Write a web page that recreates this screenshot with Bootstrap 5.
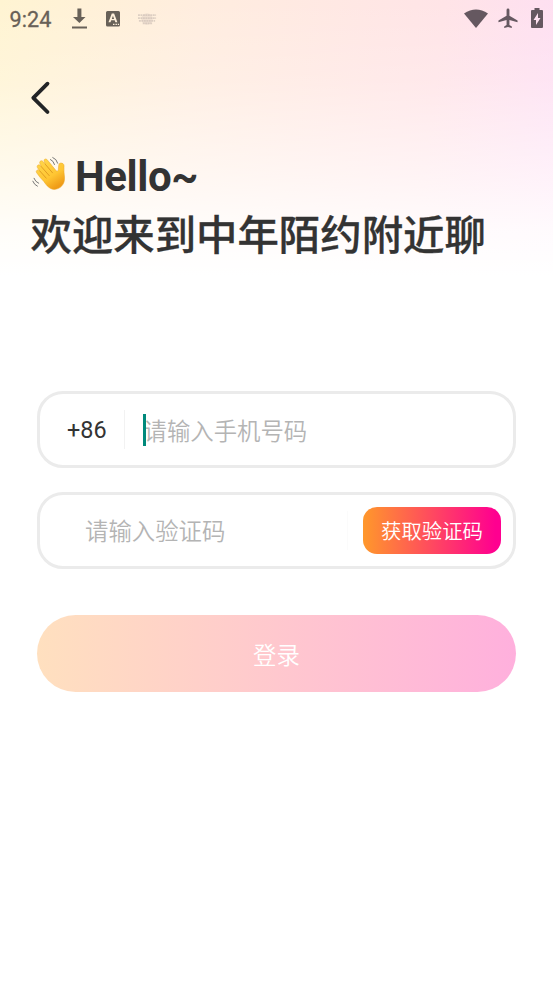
<!DOCTYPE html>
<html lang="zh-CN">
<head>
<meta charset="utf-8">
<meta name="viewport" content="width=device-width, initial-scale=1">
<title>登录</title>
<link href="https://cdn.jsdelivr.net/npm/bootstrap@5.3.0/dist/css/bootstrap.min.css" rel="stylesheet">
<style>
body{font-family:Roboto,"Noto Sans CJK SC",sans-serif;color:#333;background:#fff}
.screen{min-height:984px;background:
 linear-gradient(180deg,rgba(255,255,255,0) 0,rgba(255,255,255,.17) 80px,rgba(255,255,255,.58) 175px,rgba(255,255,255,.86) 230px,#fff 276px),
 linear-gradient(97deg,#fff4d2 0,#ffeddf 30%,#ffe4e7 66%,#fddcf8 94%)}
.status{height:37px;padding:0 11px 0 9px;color:#686158}
.clock{font-size:21.6px;line-height:37px;width:61px;letter-spacing:.1px;padding:1px 0 0 .5px;-webkit-text-stroke:.3px}
.signals{color:#655860}
.plane{margin-left:10px}
.battery{margin-left:13px;margin-right:-1px}
.back{margin:44px 0 0 30px;line-height:0;width:21px}
.hello{margin:34px 0 0 32px;height:56px}
.wave{margin-top:-6px}
.hello-text{font-size:42px;line-height:56px;font-weight:700;letter-spacing:-.4px;margin-left:7px}
.welcome{margin:1px 0 0 30.500px;font-size:41.4px;line-height:60px;font-weight:500;-webkit-text-stroke:.3px #333}
.login-form{margin:125px 37px 0}
.field{height:77px;border:3px solid #ebebeb;border-radius:26px;background:#fff}
.field+.field{margin-top:23.600px}
.code{width:84px;padding:3px 0 0 27px;font-size:23.4px;color:#333}
.rule{width:1px;height:39px;background:#f2f2f2}
.rule-faint{background:#fbfbfb;margin-right:15px;flex-shrink:0}
.field .form-control{font-size:23.4px;line-height:34px;color:#333;font-family:inherit;position:relative;top:2px}
.field .form-control::placeholder{color:#b4b4b4;opacity:1;font-weight:350}
.phone-input{padding-left:18.500px}
.sms-input{padding-left:45px}
.caret{left:18px;top:1px;width:3px;height:32px;background:#00897b}
.get-code{width:138px;height:47px;margin-right:12px;border-radius:14px;font-size:20.4px;font-weight:350;color:#fff;background:linear-gradient(90deg,#ff982b,#ff0090 96%)}
.get-code span,.submit span{display:block;padding-top:4px}
.submit span{padding-top:6px}
.submit{margin-top:46.600px;height:77px;font-size:23.4px;font-weight:350;color:#fff;background:linear-gradient(90deg,#ffe0bf,#ffb0dd)}
</style>
<script src="https://cdn.jsdelivr.net/npm/bootstrap@5.3.0/dist/js/bootstrap.bundle.min.js"></script>
</head>
<body>
<main class="screen d-flow-root overflow-hidden">
 <header class="status d-flex align-items-center">
  <span class="clock">9:24</span>
  <svg width="18" height="22" viewBox="0 0 18 22" fill="currentColor"><path d="M7.400 .5h4v8.500h4.100L9.400 15 3 9h4.400zM2 18.500h15v2H2z"/></svg>
  <svg class="ms-3" width="18" height="22" viewBox="0 0 18 22" fill="currentColor"><path fill-rule="evenodd" d="M3.500 3h11q1.500 0 1.500 1.500v12.500q0 1.500-1.500 1.500H3.500q-1.500 0-1.500-1.500V4.500Q2 3 3.500 3zM7.800 5.500 4.500 14.200h2l.7-2h3.500l.7 2h2L10.100 5.500zM8.950 7.800l1.150 3.100H7.800zM9 15.800v1.300h1.500v-1.300zm2.500 0v1.300h1.400v-1.300zm2.300 0v1.300h1.300v-1.300z"/></svg>
  <svg class="ms-3" width="19" height="18" viewBox="0 0 20 18"><circle cx="9.500" cy="9" r="6" fill="#e6d6ca" opacity=".6"/><path d="M0 5h19M0 8h19M1 11h17M5 13.500h10" stroke="#d0c2b8" stroke-width="1.800" stroke-dasharray="2 .6" opacity=".7"/></svg>
  <div class="signals ms-auto d-flex align-items-center">
   <svg width="24" height="20" viewBox="0 0 24 20" fill="currentColor"><path d="M0 4.500Q12-3.500 24 4.500L12 19z"/></svg>
   <svg class="plane" width="20" height="21" viewBox="0 0 20 22" fill="currentColor"><path d="M8.500 2q0-1.500 1.500-1.500T11.500 2v6l8.500 5v2l-8.500-2.500v5.200l2.500 1.800v1.500l-4-1-4 1v-1.500l2.500-1.800v-5.200L0 15v-2l8.500-5z"/></svg>
   <svg class="battery" width="12" height="21" viewBox="0 0 12 21" fill="currentColor"><path fill-rule="evenodd" d="M3.500 0h5v2H11q1 0 1 1v16q0 1-1 1H1q-1 0-1-1V3q0-1 1-1h2.500zM7 5l-4.500 7H5v5l4.500-7H7z"/></svg>
  </div>
 </header>
 <div class="back"><svg width="21" height="34" viewBox="0 0 21 34" fill="none" stroke="#222426" stroke-width="3.800" stroke-linecap="round" stroke-linejoin="round"><path d="M17.500 2.700 3.300 16.800 17.500 31"/></svg></div>
 <div class="hello d-flex align-items-center">
  <svg class="wave" width="36" height="37" viewBox="0 0 36 37" fill="none" stroke-linecap="round">
   <defs><linearGradient id="skin" x1="0" y1="0" x2=".6" y2="1"><stop offset="0" stop-color="#ffd84d"/><stop offset=".65" stop-color="#ffc633"/><stop offset="1" stop-color="#ef9b17"/></linearGradient></defs>
   <path fill="url(#skin)" stroke="#e9a526" stroke-width=".5" d="M8.200 21.500 4.600 16.700c-1.300-1.900 1.200-3.900 2.700-2.100l.6.500-2.400-3.300c-1.400-2.100 1.300-4.100 3-2.100l1 1.200-1.600-3.300C6.900 5.200 9.600 3.600 11.200 5.700l2.300 2.800-1.300-3C11.200 3.400 13.900 1.800 15.400 4l8.800 10.800c.8.900 2 .2 2.100-1.100l.4-4.400c.2-1.700 1.300-2.500 2.800-2.200 2.400.4 2.800 2 2.500 4.500-.3 3 .2 6.200.5 9.400.7 7.500-4.300 12-10 12.400-4.500.1-7.900-3.700-10.500-7.700z"/>
   <path d="m7.900 15.100 6.300 7M9.500 10.900l7.700 8.700M13.500 8.500l7 8.300" stroke="#dc971f" stroke-width=".9"/>
   <path d="M18.500 3.500q3 1.200 4 5M20.800 1.500q3.800 1.400 4.900 5.700M2 22.300q1.300 3.600 4.700 5M.8 25.200q1.400 3.700 4.600 5" stroke="#777" stroke-width="1"/>
  </svg>
  <span class="hello-text">Hello~</span>
 </div>
 <div class="welcome text-nowrap">欢迎来到中年陌约附近聊</div>
 <form class="login-form">
  <div class="field d-flex align-items-center">
   <span class="code">+86</span><span class="rule"></span>
   <div class="position-relative flex-grow-1"><input class="phone-input form-control border-0 bg-transparent shadow-none py-0 pe-0" type="tel" placeholder="请输入手机号码" aria-label="手机号码"><span class="caret position-absolute"></span></div>
  </div>
  <div class="field d-flex align-items-center">
   <input class="sms-input form-control border-0 bg-transparent shadow-none py-0 pe-0" type="text" placeholder="请输入验证码" aria-label="验证码">
   <span class="rule rule-faint"></span>
   <button type="button" class="get-code btn border-0 p-0 flex-shrink-0"><span>获取验证码</span></button>
  </div>
  <button type="button" class="submit btn border-0 w-100 rounded-pill p-0"><span>登录</span></button>
 </form>
</main>
</body>
</html>
